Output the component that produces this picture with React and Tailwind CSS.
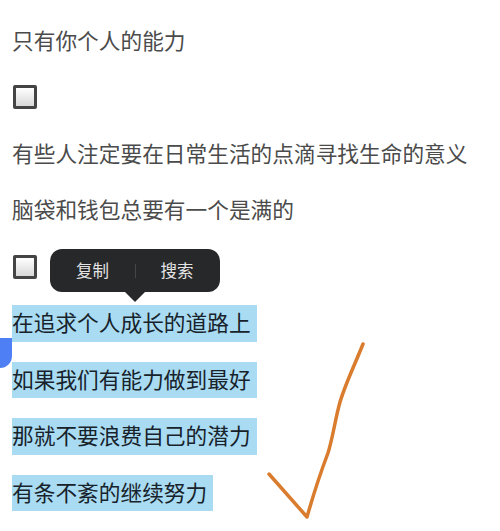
const font = { fontFamily: '"Noto Sans CJK SC", sans-serif' };

function Checkbox() {
  return (
    <div className="w-6 h-6 rounded-[2px] border-[3px] border-[#444444] bg-gradient-to-b from-white to-[#d8d8d8]" />
  );
}

function Line({ children }) {
  return (
    <p className="h-[36.5px] mb-5 leading-[33px] text-[21.7px] text-[#4b4b4b] whitespace-nowrap">{children}</p>
  );
}

function Picked({ children }) {
  return (
    <p className="h-[36.5px] mb-5 leading-[33px] text-[21.7px] text-[#17222b] whitespace-nowrap">
      <span className="inline-block h-full pr-1.5 bg-[#a9dcf2]">{children}</span>
    </p>
  );
}

function CheckRow() {
  return (
    <div className="h-[36.5px] mb-5 flex items-center pl-px">
      <Checkbox />
    </div>
  );
}

export default function App() {
  return (
    <div className="relative w-[500px] h-[531px] overflow-hidden bg-white pt-[22.5px] pl-3" style={font}>
      <Line>只有你个人的能力</Line>
      <CheckRow />
      <Line>有些人注定要在日常生活的点滴寻找生命的意义</Line>
      <Line>脑袋和钱包总要有一个是满的</Line>
      <CheckRow />
      <Picked>在追求个人成长的道路上</Picked>
      <Picked>如果我们有能力做到最好</Picked>
      <Picked>那就不要浪费自己的潜力</Picked>
      <Picked>有条不紊的继续努力</Picked>

      {/* selection menu */}
      <div className="absolute left-[50px] top-[249px] w-[170px] h-[43px] rounded-xl bg-[#27282a] flex items-center text-[#e4e4e4] text-[16.5px]">
        <span className="w-[85px] text-center">复制</span>
        <span className="w-px h-[14px] bg-[#46474a]" />
        <span className="w-[84px] pr-[2px] text-center">搜索</span>
      </div>
      <div className="absolute left-[125px] top-[292px] w-0 h-0 border-x-[10px] border-x-transparent border-t-[10px] border-t-[#27282a]" />

      {/* selection handle */}
      <div className="absolute left-0 top-[338px] w-3 h-[30px] rounded-br-xl bg-[#4f7ff5]" />

      {/* hand drawn tick */}
      <svg className="absolute left-0 top-0" width="500" height="531" fill="none">
        <path
          d="M269 474 L307 517 C313 496 320 474 328 453 C333 437 335 420 340 402 C346 382 356 362 363 344"
          stroke="#d97c2e"
          strokeWidth="3.5"
          strokeLinecap="round"
          strokeLinejoin="round"
        />
      </svg>
    </div>
  );
}
